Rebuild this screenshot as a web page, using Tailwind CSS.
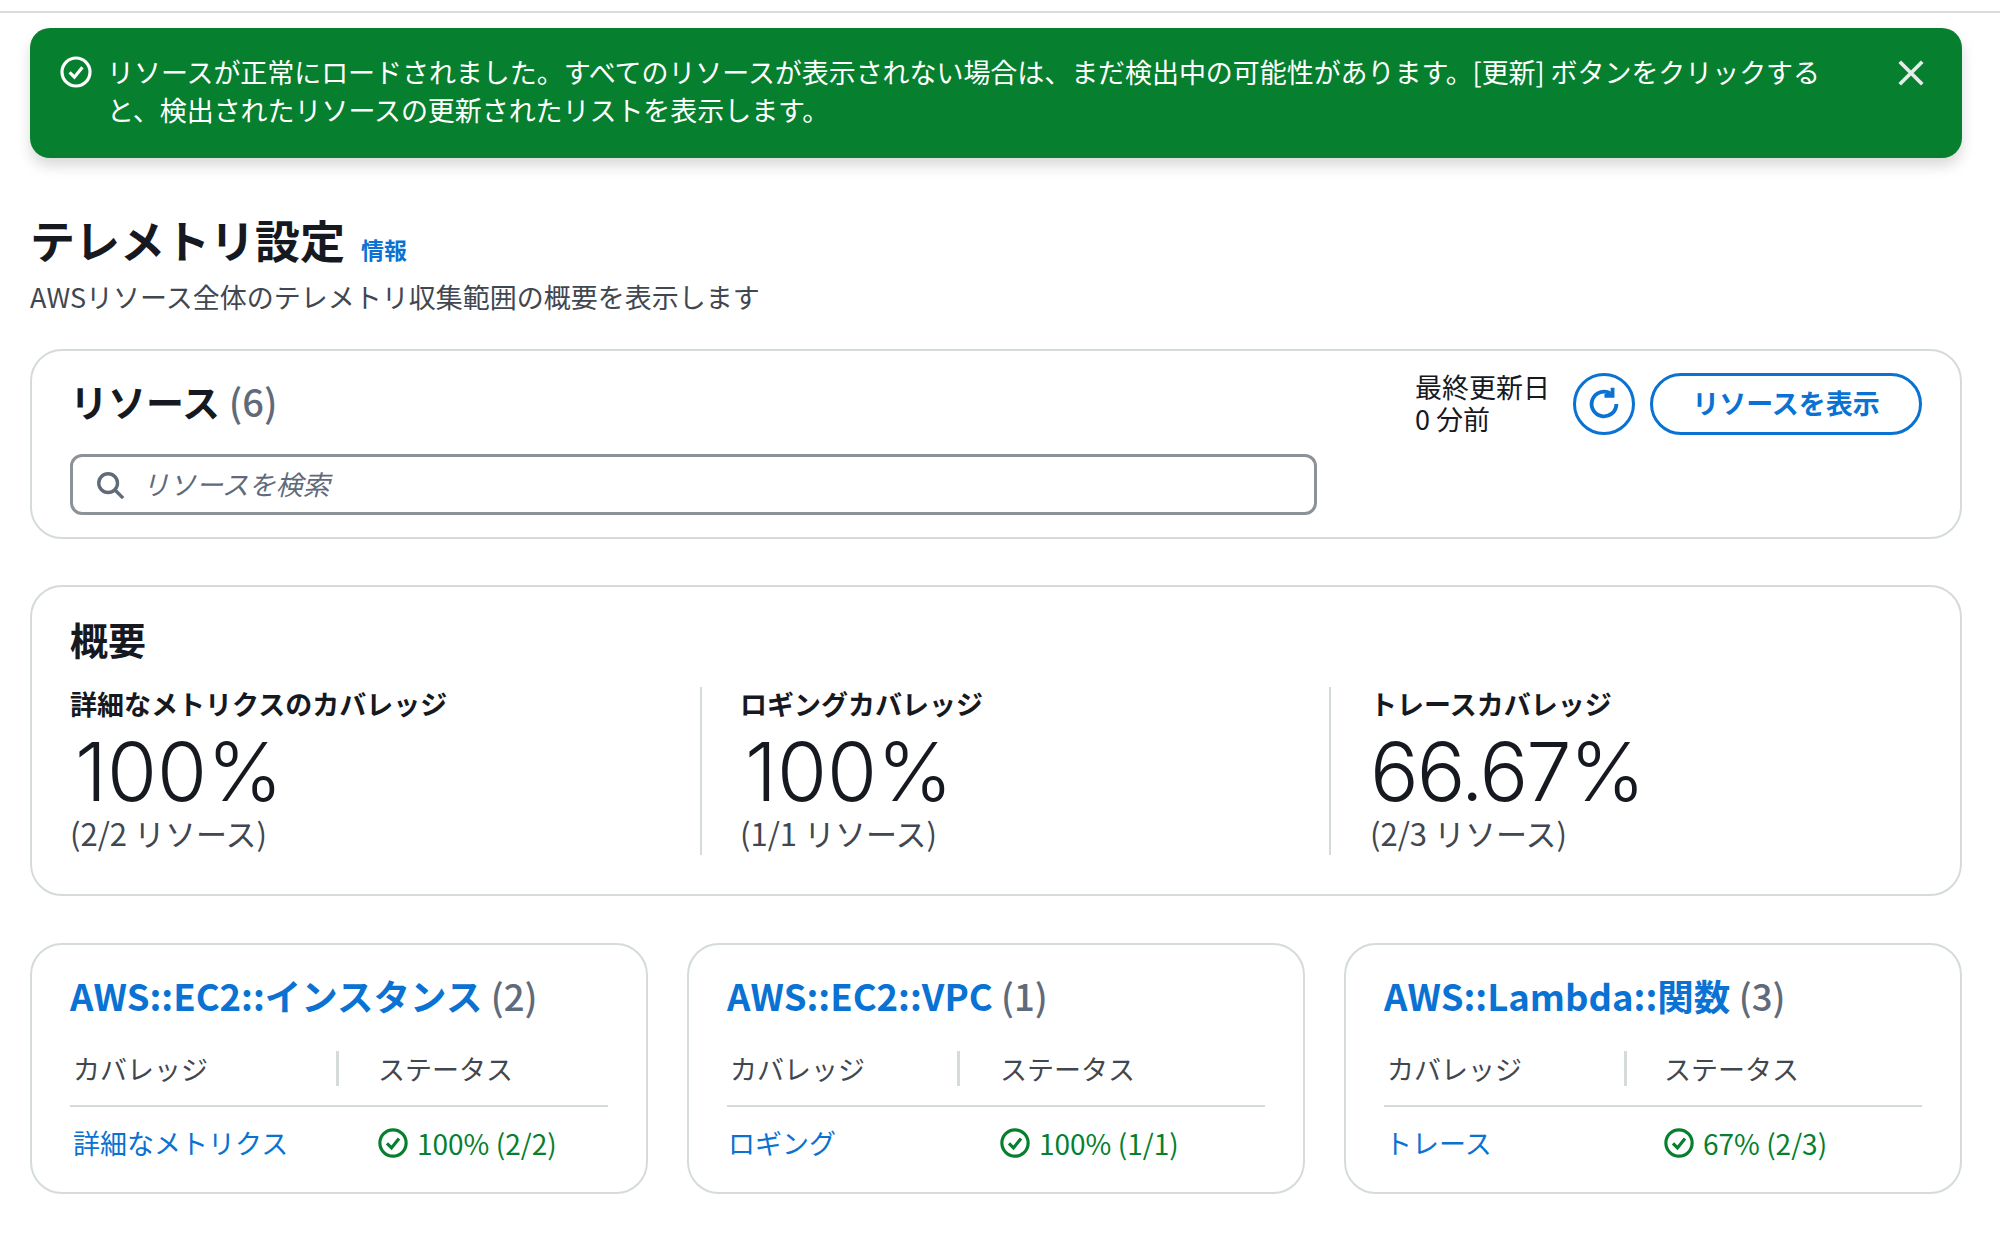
<!DOCTYPE html>
<html lang="ja">
<head>
    <meta charset="UTF-8">
    <title>テレメトリ設定</title>
    <script src="https://cdn.jsdelivr.net/npm/@tailwindcss/browser@4"></script>
</head>
<body class="bg-white text-[#16191f] font-['Noto_Sans_CJK_JP','Noto_Sans',sans-serif]">
    <div class="h-[13px] border-b-2 border-[#d9dcdf]"></div>

    <div class="pl-[30px] pr-[38px] pt-[15px]">
        <!-- Flash -->
        <div class="h-[130px] rounded-[20px] bg-[#067f2f] text-white flex items-start pl-[30px] pr-[36px] pt-[24px] shadow-[0_8px_14px_rgba(0,0,0,0.15)]">
            <svg class="w-[32px] h-[32px] mt-[4px] shrink-0" viewBox="0 0 16 16" fill="none" stroke="currentColor" stroke-width="1.6"><circle cx="8" cy="8" r="7"/><path d="M4.8 8.2 7.2 10.6 11.2 5.6"/></svg>
            <p class="ml-[15px] mt-[1px] flex-1 text-[27px] leading-[38px] tracking-[-0.06px]">リソースが正常にロードされました。すべてのリソースが表示されない場合は、まだ検出中の可能性があります。[更新] ボタンをクリックする<br>と、検出されたリソースの更新されたリストを表示します。</p>
            <svg class="w-[30px] h-[30px] mt-[6px] shrink-0" viewBox="0 0 16 16" fill="none" stroke="#e6ece8" stroke-width="2"><path d="M2 2 14 14M14 2 2 14"/></svg>
        </div>

        <!-- Header -->
        <div class="mt-[52px]">
            <div class="flex items-baseline gap-[16px]">
                <h1 class="text-[45px] leading-[60px] font-bold">テレメトリ設定</h1>
                <a class="text-[23px] font-bold text-[#0972d3]">情報</a>
            </div>
            <p class="text-[27px] leading-[38px] text-[#414750] mt-[8px]">AWSリソース全体のテレメトリ収集範囲の概要を表示します</p>
        </div>

        <!-- Resources -->
        <div class="mt-[33px] h-[190px] rounded-[32px] border-2 border-[#d5dbdb] px-[38px] pt-[22px] flex justify-between">
            <div class="w-[1247px]">
                <h2 class="text-[38px] leading-[56px] font-bold">リソース <span class="font-medium text-[#5f6b7a]">(6)</span></h2>
                <div class="mt-[25px] h-[61px] rounded-[12px] border-[3px] border-[#8d9299] flex items-center pl-[22px]">
                    <svg class="w-[30px] h-[30px] shrink-0" viewBox="0 0 16 16" fill="none" stroke="#5f6b7a" stroke-width="1.8"><circle cx="7" cy="7" r="5"/><path d="M10.5 10.5 15 15"/></svg>
                    <span class="ml-[17px] text-[27px] italic text-[#5f6b7a]">リソースを検索</span>
                </div>
            </div>
            <div class="flex items-start">
                <div class="text-[27px] leading-[32px] mt-[-2px]">最終更新日<br>0 分前</div>
                <button class="ml-[23px] w-[62px] h-[62px] rounded-full border-[3px] border-[#0972d3] flex items-center justify-center text-[#0972d3]">
                    <svg class="w-[36px] h-[36px]" viewBox="0 0 16 16" fill="none" stroke="currentColor" stroke-width="1.7"><path d="M13.5 8A5.5 5.5 0 1 1 11 3.4"/><path d="M11.8 0.8V4.4H8.2"/></svg>
                </button>
                <button class="ml-[15px] w-[272px] h-[62px] pb-[2px] rounded-full border-[3px] border-[#0972d3] text-[27px] font-bold text-[#0972d3]">リソースを表示</button>
            </div>
        </div>

        <!-- Overview -->
        <div class="mt-[46px] h-[311px] rounded-[32px] border-2 border-[#d5dbdb] px-[38px] pt-[24px]">
            <h2 class="text-[38px] leading-[56px] font-bold">概要</h2>
            <div class="mt-[20px] flex">
                <div class="w-[632px] h-[168px] border-r-2 border-[#d5dbdb]">
                    <div class="mt-[-1px] text-[27px] leading-[36px] font-bold">詳細なメトリクスのカバレッジ</div>
                    <div class="mt-[7px] ml-[5px] text-[81px] leading-[86px] font-light font-['Inter',sans-serif]">100%</div>
                    <div class="text-[31px] leading-[36px] text-[#414750]">(2/2 リソース)</div>
                </div>
                <div class="w-[629px] h-[168px] pl-[38px] border-r-2 border-[#d5dbdb]">
                    <div class="mt-[-1px] text-[27px] leading-[36px] font-bold">ロギングカバレッジ</div>
                    <div class="mt-[7px] ml-[5px] text-[81px] leading-[86px] font-light font-['Inter',sans-serif]">100%</div>
                    <div class="text-[31px] leading-[36px] text-[#414750]">(1/1 リソース)</div>
                </div>
                <div class="pl-[39px]">
                    <div class="mt-[-1px] text-[27px] leading-[36px] font-bold">トレースカバレッジ</div>
                    <div class="mt-[7px] text-[81px] leading-[86px] font-light tracking-[-2px] font-['Inter',sans-serif]">66.67%</div>
                    <div class="text-[31px] leading-[36px] text-[#414750]">(2/3 リソース)</div>
                </div>
            </div>
        </div>

        <!-- Resource type cards -->
        <div class="mt-[47px] grid grid-cols-3 gap-[39px]">
            <div class="h-[251px] rounded-[32px] border-2 border-[#d5dbdb] px-[38px] pt-[24px]">
                <h3 class="text-[36.5px] leading-[54px] font-bold"><a class="text-[#0972d3]">AWS::EC2::インスタンス</a> <span class="font-medium text-[#5f6b7a]">(2)</span></h3>
                <div class="mt-[28px] h-[56px] flex items-start border-b-2 border-[#d5dbdb] text-[27px] leading-[36px] text-[#414750]">
                    <div class="w-[269px] h-[35px] pl-[3px] border-r-[3px] border-[#d5dbdb]">カバレッジ</div>
                    <div class="pl-[39px]">ステータス</div>
                </div>
                <div class="mt-[18px] flex items-center text-[27px] leading-[36px]">
                    <a class="w-[308px] pl-[3px] text-[#0972d3]">詳細なメトリクス</a>
                    <span class="flex items-center text-[28px] text-[#067f2f]"><svg class="w-[30px] h-[30px] mr-[9px]" viewBox="0 0 16 16" fill="none" stroke="currentColor" stroke-width="1.7"><circle cx="8" cy="8" r="7"/><path d="M4.8 8.2 7.2 10.6 11.2 5.6"/></svg>100% (2/2)</span>
                </div>
            </div>
            <div class="h-[251px] rounded-[32px] border-2 border-[#d5dbdb] px-[38px] pt-[24px]">
                <h3 class="text-[36.5px] leading-[54px] font-bold"><a class="text-[#0972d3]">AWS::EC2::VPC</a> <span class="font-medium text-[#5f6b7a]">(1)</span></h3>
                <div class="mt-[28px] h-[56px] flex items-start border-b-2 border-[#d5dbdb] text-[27px] leading-[36px] text-[#414750]">
                    <div class="w-[233px] h-[35px] pl-[3px] border-r-[3px] border-[#d5dbdb]">カバレッジ</div>
                    <div class="pl-[40px]">ステータス</div>
                </div>
                <div class="mt-[18px] flex items-center text-[27px] leading-[36px]">
                    <a class="w-[273px] pl-[1px] text-[#0972d3]">ロギング</a>
                    <span class="flex items-center text-[28px] text-[#067f2f]"><svg class="w-[30px] h-[30px] mr-[9px]" viewBox="0 0 16 16" fill="none" stroke="currentColor" stroke-width="1.7"><circle cx="8" cy="8" r="7"/><path d="M4.8 8.2 7.2 10.6 11.2 5.6"/></svg>100% (1/1)</span>
                </div>
            </div>
            <div class="h-[251px] rounded-[32px] border-2 border-[#d5dbdb] px-[38px] pt-[24px]">
                <h3 class="text-[36.5px] leading-[54px] font-bold"><a class="text-[#0972d3]">AWS::Lambda::関数</a> <span class="font-medium text-[#5f6b7a]">(3)</span></h3>
                <div class="mt-[28px] h-[56px] flex items-start border-b-2 border-[#d5dbdb] text-[27px] leading-[36px] text-[#414750]">
                    <div class="w-[243px] h-[35px] pl-[3px] border-r-[3px] border-[#d5dbdb]">カバレッジ</div>
                    <div class="pl-[37px]">ステータス</div>
                </div>
                <div class="mt-[18px] flex items-center text-[27px] leading-[36px]">
                    <a class="w-[280px] pl-[1px] text-[#0972d3]">トレース</a>
                    <span class="flex items-center text-[28px] text-[#067f2f]"><svg class="w-[30px] h-[30px] mr-[9px]" viewBox="0 0 16 16" fill="none" stroke="currentColor" stroke-width="1.7"><circle cx="8" cy="8" r="7"/><path d="M4.8 8.2 7.2 10.6 11.2 5.6"/></svg>67% (2/3)</span>
                </div>
            </div>
        </div>
    </div>
</body>
</html>
